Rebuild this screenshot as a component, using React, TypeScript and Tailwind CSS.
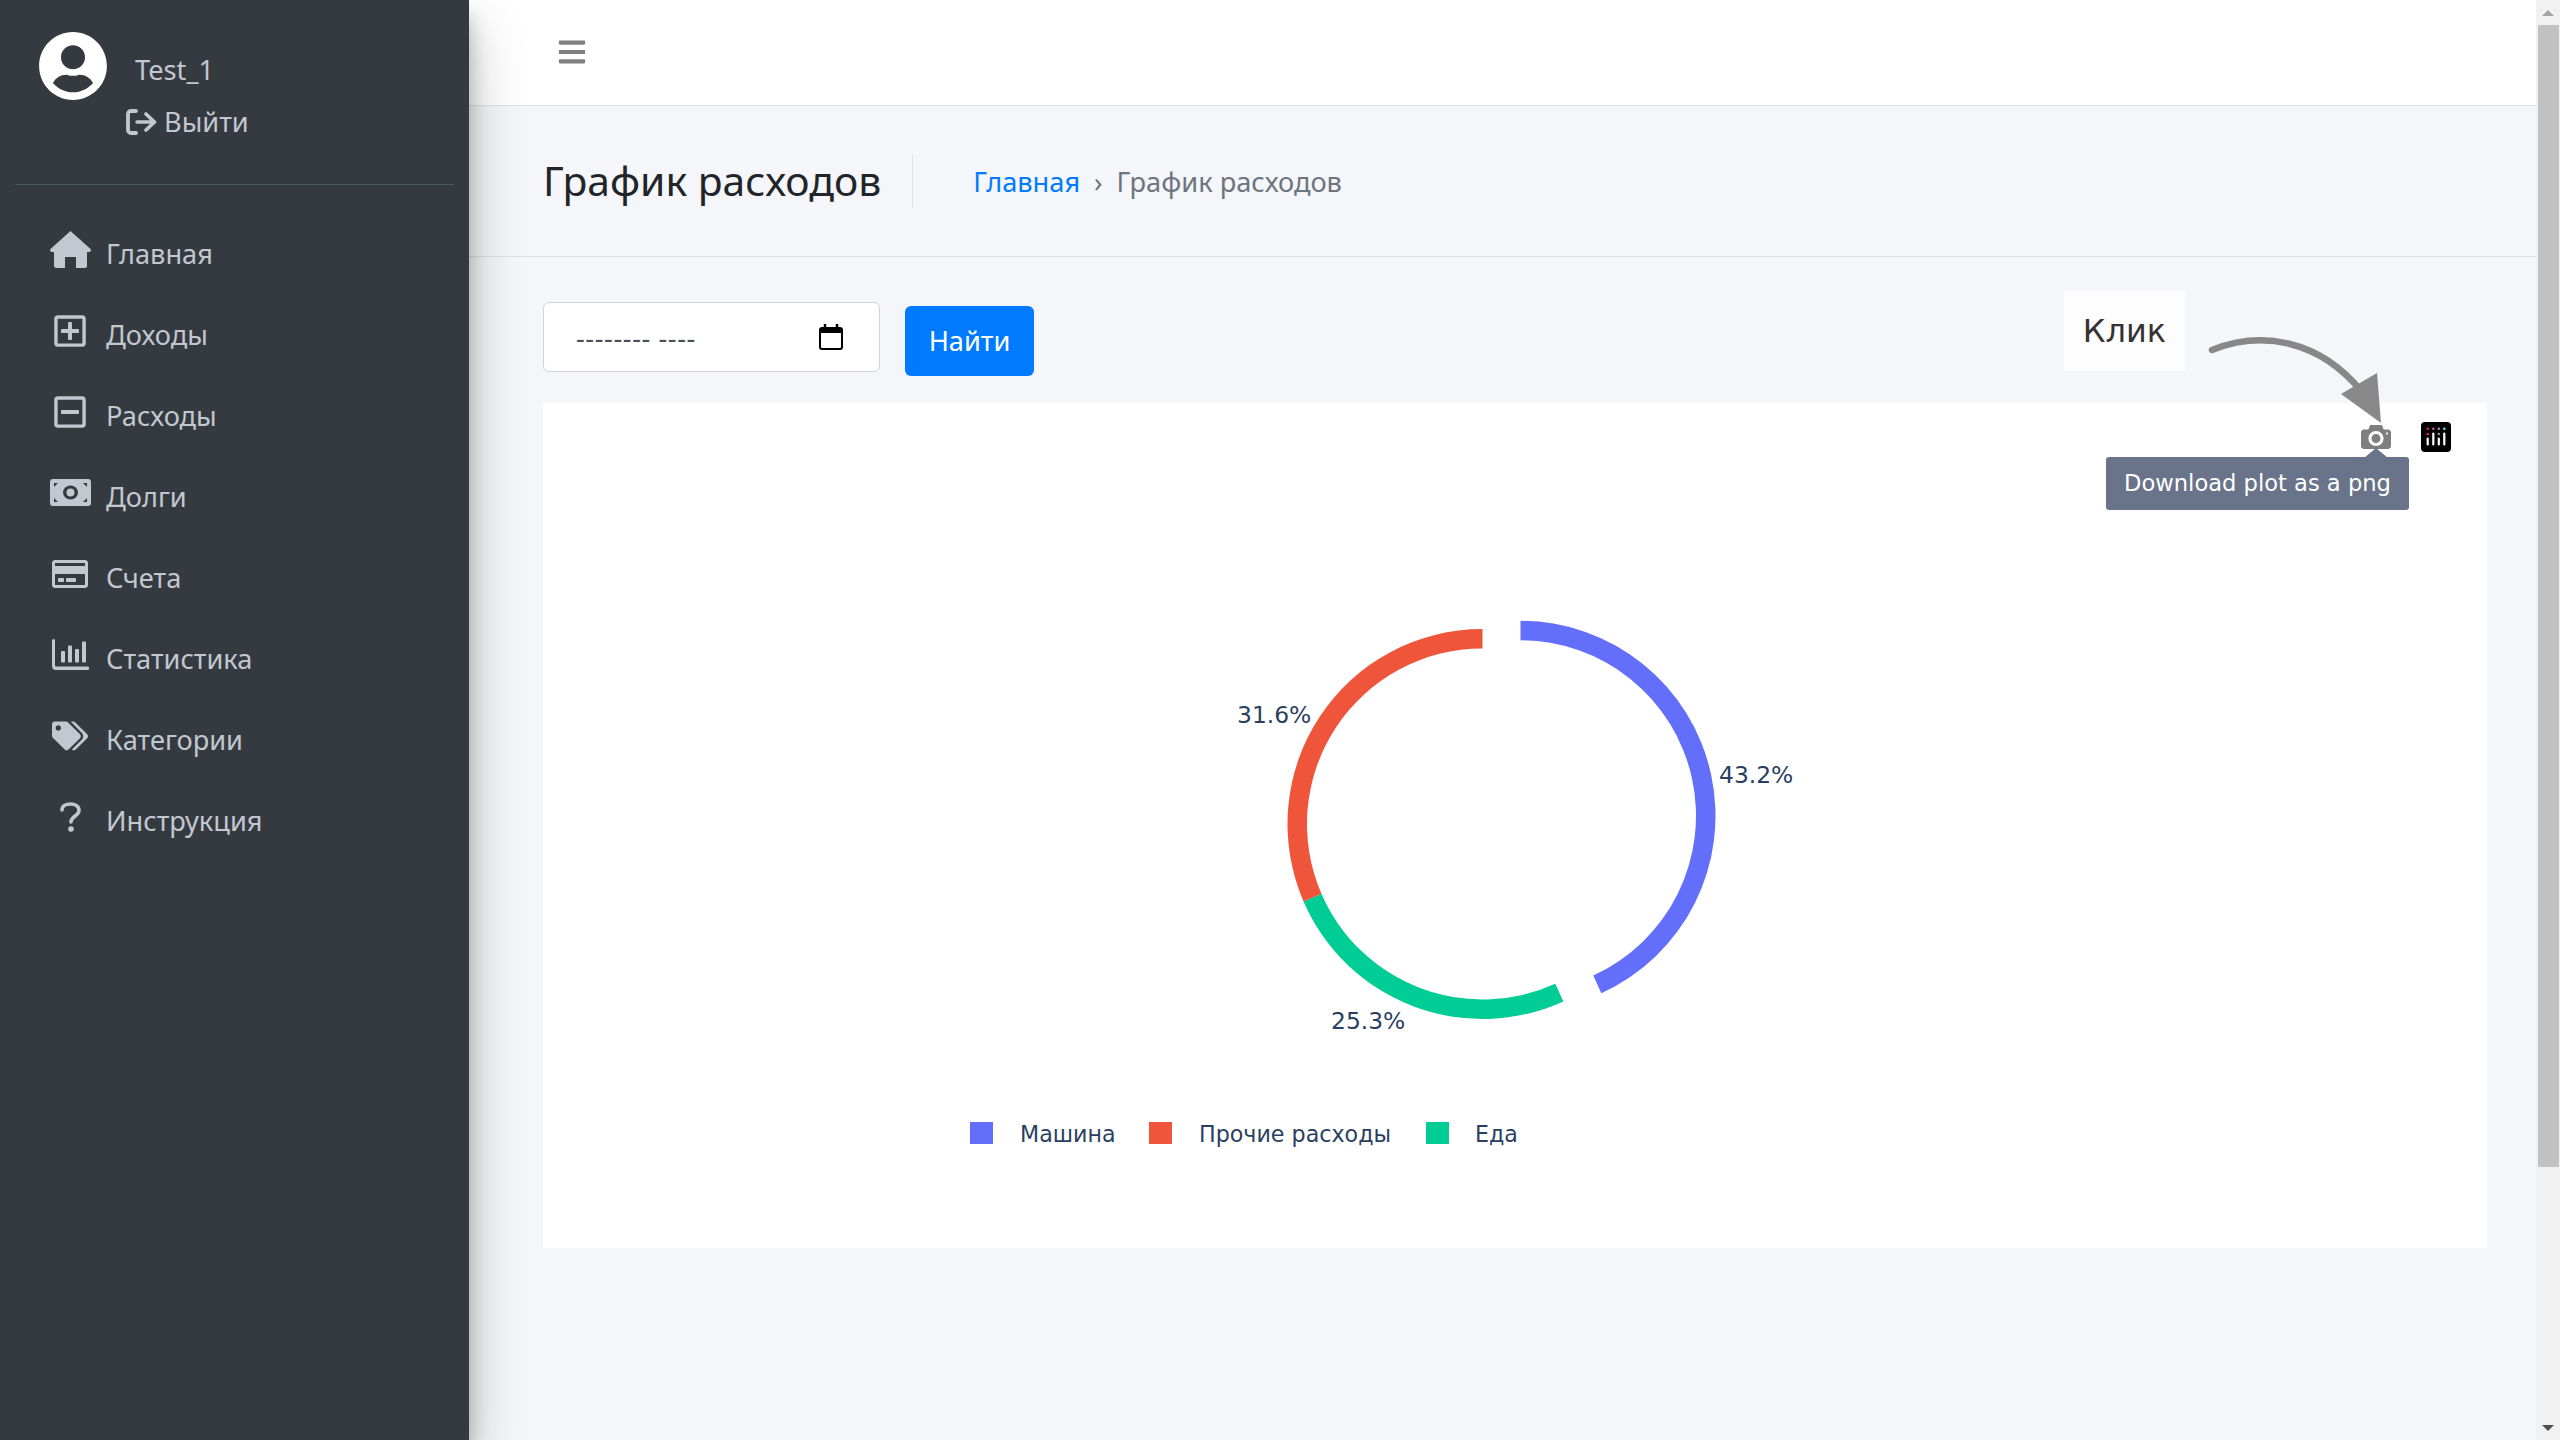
import { FaBars, FaRegCreditCard, FaRegMinusSquare, FaRegPlusSquare, FaTags, FaUserCircle } from "react-icons/fa";

const HomeIcon = () => (
  <svg width="41" height="37" viewBox="0 0 41 37" fill="#c2c7d0">
    <path d="M20.5 0L40 17.5Q41.5 19 40.5 20.2Q39.5 21.4 37 21V34.5Q37 37 34.5 37H26V26H15V37H6.5Q4 37 4 34.5V21Q1.5 21.4 0.5 20.2Q-0.5 19 1 17.5Z" />
  </svg>
);

const MoneyIcon = () => (
  <svg width="41" height="27" viewBox="0 0 41 27">
    <rect width="41" height="27" rx="3" fill="#c2c7d0" />
    <ellipse cx="20.5" cy="13.5" rx="7.5" ry="7" fill="#343a40" />
    <ellipse cx="20.5" cy="13.5" rx="4" ry="4" fill="#c2c7d0" />
    <path d="M4 4h4l-4 4zM37 4h-4l4 4zM4 23h4l-4-4zM37 23h-4l4-4z" fill="#343a40" />
  </svg>
);

const StatsIcon = () => (
  <svg width="37" height="31" viewBox="0 0 37 31" fill="#c2c7d0">
    <path d="M0 1.5a1.5 1.5 0 0 1 3 0V26a1.5 1.5 0 0 0 1.5 1.5H35.500a1.750 1.750 0 0 1 0 3.500H4Q0 31 0 27Z" />
    <rect x="9" y="12" width="4" height="11.500" rx="1" />
    <rect x="16" y="6.500" width="4" height="17" rx="1" />
    <rect x="23" y="10" width="4" height="13.500" rx="1" />
    <rect x="30" y="2.500" width="4" height="21" rx="1" />
  </svg>
);

const QuestionIcon = () => (
  <svg width="21" height="30" viewBox="0 0 21 30" fill="none" stroke="#c2c7d0" strokeWidth="3.600" strokeLinecap="round">
    <path d="M2 8C2 4 5.500 2 10.500 2C15.500 2 19 4.500 19 8.500C19 14 11 14 11 20" />
    <circle cx="11" cy="27" r="2.800" fill="#c2c7d0" stroke="none" />
  </svg>
);

const LogoutIcon = () => (
  <svg width="31" height="26" viewBox="0 0 31 26" fill="none" stroke="#c2c7d0" strokeLinecap="round" strokeLinejoin="round">
    <path d="M10 2H5a3 3 0 0 0-3 3v16a3 3 0 0 0 3 3h5" strokeWidth="3.800" />
    <path d="M11 13h17M20 5l8.500 8-8.500 8" strokeWidth="3.600" />
  </svg>
);

const nav = [
  { label: "Главная", icon: <HomeIcon /> },
  { label: "Доходы", icon: <FaRegPlusSquare size={36} /> },
  { label: "Расходы", icon: <FaRegMinusSquare size={36} /> },
  { label: "Долги", icon: <MoneyIcon /> },
  { label: "Счета", icon: <FaRegCreditCard size={36} /> },
  { label: "Статистика", icon: <StatsIcon /> },
  { label: "Категории", icon: <FaTags size={36} /> },
  { label: "Инструкция", icon: <QuestionIcon /> },
];

// ring segment, angles in degrees clockwise from the top
const arc = (cx: number, cy: number, from: number, to: number) => {
  const R = 195;
  const r = 175.5;
  const pt = (rad: number, a: number) => {
    const t = (a * Math.PI) / 180;
    return `${(cx + rad * Math.sin(t)).toFixed(2)} ${(cy - rad * Math.cos(t)).toFixed(2)}`;
  };
  const large = to - from > 180 ? 1 : 0;
  return `M${pt(R, from)}A${R} ${R} 0 ${large} 1 ${pt(R, to)}L${pt(r, to)}A${r} ${r} 0 ${large} 0 ${pt(r, from)}Z`;
};

const Chart = () => (
  <svg viewBox="543 403 1944 845" className="absolute inset-0 w-full h-full" fontFamily="'DejaVu Sans', sans-serif" fontSize="23.4" fill="#2a3f5f">
    <path d={arc(1520.5, 815.8, 0, 155.5)} fill="#636efa" />
    <path d={arc(1482.5, 824, 155.5, 246.6)} fill="#00cc96" />
    <path d={arc(1482.5, 824, 246.6, 360)} fill="#ef553b" />
    <text x="1719" y="783">43.2%</text>
    <text x="1237" y="723">31.6%</text>
    <text x="1331" y="1029">25.3%</text>
    <rect x="970" y="1122" width="23" height="22" fill="#636efa" />
    <text x="1020" y="1142" fontSize="22.2">Машина</text>
    <rect x="1149" y="1122" width="23" height="22" fill="#ef553b" />
    <text x="1199" y="1142" fontSize="22.2">Прочие расходы</text>
    <rect x="1426" y="1122" width="23" height="22" fill="#00cc96" />
    <text x="1475" y="1142" fontSize="22.2">Еда</text>
  </svg>
);

const CameraIcon = () => (
  <svg width="30" height="30" viewBox="0 0 1000 1000" fill="#7f7f7f">
    <path
      transform="matrix(1 0 0 -1 0 850)"
      d="M500 450c-83 0-150-67-150-150 0-83 67-150 150-150 83 0 150 67 150 150 0 83-67 150-150 150z m400 150h-120c-16 0-34 13-39 29l-31 93c-6 15-23 28-40 28h-340c-16 0-34-13-39-28l-31-94c-6-15-23-28-40-28h-120c-55 0-100-45-100-100v-450c0-55 45-100 100-100h800c55 0 100 45 100 100v450c0 55-45 100-100 100z m-400-550c-138 0-250 112-250 250 0 138 112 250 250 250 138 0 250-112 250-250 0-138-112-250-250-250z m365 380c-19 0-35 16-35 35 0 19 16 35 35 35 19 0 35-16 35-35 0-19-16-35-35-35z"
    />
  </svg>
);

const PlotlyLogo = () => (
  <svg width="30" height="30" viewBox="0 0 30 30">
    <rect width="30" height="30" rx="4" fill="#000" />
    <circle cx="6.7" cy="6.7" r="1.3" fill="#ea1a5f" />
    <circle cx="12.3" cy="6.7" r="1.3" fill="#c95f9b" />
    <circle cx="17.8" cy="6.7" r="1.3" fill="#b187d0" />
    <circle cx="23.3" cy="6.7" r="1.3" fill="#6fd8f1" />
    <circle cx="6.7" cy="12" r="1.3" fill="#ea1a5f" />
    <circle cx="17.8" cy="12" r="1.3" fill="#b187d0" />
    <g fill="#fff">
      <rect x="5.6" y="15.5" width="2.2" height="8" rx="1.1" />
      <rect x="11.2" y="10.5" width="2.2" height="13" rx="1.1" />
      <rect x="16.7" y="15.5" width="2.2" height="8" rx="1.1" />
      <rect x="22.2" y="10.5" width="2.2" height="13" rx="1.1" />
    </g>
  </svg>
);

export default function App() {
  return (
    <div className="flex h-screen w-full overflow-hidden bg-[#f4f6f9] font-['Noto_Sans',sans-serif] text-[27.2px] text-[#212529]">
      {/* Sidebar */}
      <aside className="relative z-10 w-[469px] shrink-0 bg-[#343a40] text-[#c2c7d0] shadow-[0_26px_52px_rgba(0,0,0,0.25),0_18px_18px_rgba(0,0,0,0.22)]">
        <div className="mx-[15px] flex h-[185px] border-b border-[#4f5962] pl-[23px] pt-[31px]">
          <FaUserCircle size={70} className="text-white" />
          <div className="ml-[18px] leading-[38px]">
            <div className="pl-[9px] pt-[20px]">Test_1</div>
            <div className="mt-[14px] flex items-center gap-[7px]">
              <LogoutIcon />
              <span>Выйти</span>
            </div>
          </div>
        </div>
        <nav className="mt-[29px]">
          {nav.map((item) => (
            <div key={item.label} className="flex h-[81px] items-center">
              <span className="ml-[45px] flex h-[40px] w-[50px] -translate-y-[5px] items-center justify-center">{item.icon}</span>
              <span className="ml-[11px]">{item.label}</span>
            </div>
          ))}
        </nav>
      </aside>

      {/* Main column */}
      <main className="relative flex min-w-0 flex-1 flex-col">
        <header className="flex h-[106px] items-center border-b border-[#dee2e6] bg-white pb-[2px] pl-[88px]">
          <FaBars size={30} className="text-[#808080]" />
        </header>

        <div className="flex h-[151px] items-center border-b border-[#dee2e6] pl-[74px]">
          <h1 className="text-[40.8px] font-normal">График расходов</h1>
          <div className="ml-[31px] h-[54px] w-px bg-[#dee2e6]" />
          <div className="ml-[60px] mt-[2px] flex items-center">
            <a className="text-[#007bff]">Главная</a>
            <span className="mx-[14px] text-[#6c757d]">›</span>
            <span className="text-[#6c757d]">График расходов</span>
          </div>
        </div>

        <div className="flex flex-1 flex-col pl-[74px] pr-[49px] pt-[45px]">
          <div className="mb-[27px] flex items-start gap-[25px]">
            <div className="flex h-[70px] w-[337px] items-center justify-between rounded-[6px] border border-[#ced4da] bg-white pl-[32px] pr-[36px]">
              <span className="pt-[2px] tracking-[0.6px] text-[#495057]">-------- ----</span>
              <svg width="24" height="26" viewBox="0 0 24 26" fill="none" stroke="#000">
                <rect x="1" y="4" width="22" height="21" rx="2" strokeWidth="2" />
                <path d="M1 6.5h22" strokeWidth="5" />
                <path d="M6 0v4M18 0v4" strokeWidth="2.5" />
              </svg>
            </div>
            <button className="mt-[4px] flex h-[70px] w-[129px] items-center justify-center rounded-[6px] bg-[#007bff] text-white">Найти</button>
          </div>

          <div className="relative h-[845px] bg-white">
            <Chart />
            <div className="absolute left-[1818px] top-[19px]"><CameraIcon /></div>
            <div className="absolute left-[1878px] top-[19px]"><PlotlyLogo /></div>
            <div className="absolute left-[1563px] top-[54px] flex h-[53px] w-[303px] items-center justify-center rounded-[3px] bg-[#69738a] pt-[1px] font-['DejaVu_Sans',sans-serif] text-[22.6px] text-white">
              Download plot as a png
              <svg width="24" height="10" viewBox="0 0 24 10" className="absolute -top-[9px] left-[258px]">
                <path d="M12 0L24 10H0z" fill="#69738a" />
              </svg>
            </div>
          </div>
        </div>

        {/* Annotation drawn over the screenshot */}
        <div className="absolute left-[1595px] top-[290px] flex h-[81px] w-[121px] items-center justify-center bg-[#fdfdfd] font-['DejaVu_Sans',sans-serif] text-[32px] text-[#333]">Клик</div>
        <svg width="200" height="110" viewBox="2200 325 200 110" className="absolute left-[1731px] top-[325px]" fill="#888888">
          <path d="M2212 350C2262 330 2320 340 2362 392" fill="none" stroke="#888888" strokeWidth="6.5" strokeLinecap="round" />
          <path d="M2381 423L2377 373L2341 394Z" />
        </svg>
      </main>

      {/* Page scrollbar */}
      <div className="flex w-[24px] shrink-0 flex-col items-center bg-[#f1f1f1]">
        <div className="flex h-[25px] w-full items-center justify-center">
          <div className="h-0 w-0 border-x-[6px] border-b-[6px] border-x-transparent border-b-[#a3a3a3]" />
        </div>
        <div className="ml-[1px] h-[1142px] w-[21px] bg-[#c1c1c1]" />
        <div className="mt-auto flex h-[25px] w-full items-center justify-center">
          <div className="h-0 w-0 border-x-[6px] border-t-[6px] border-x-transparent border-t-[#505050]" />
        </div>
      </div>
    </div>
  );
}
